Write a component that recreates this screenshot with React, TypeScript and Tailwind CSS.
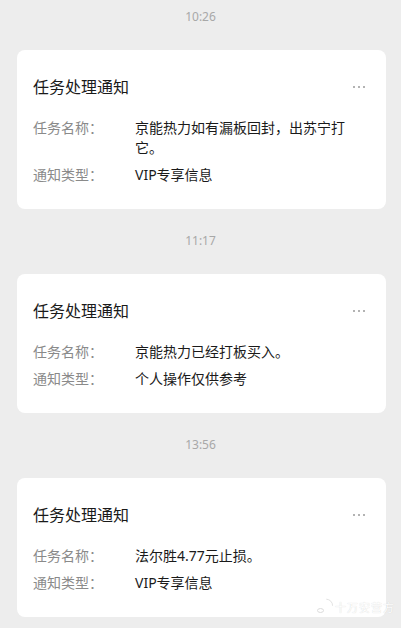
import React from "react";

type Row = { label: string; value: string };
type Notice = { time: string; title: string; rows: Row[] };

const notices: Notice[] = [
  {
    time: "10:26",
    title: "任务处理通知",
    rows: [
      { label: "任务名称：", value: "京能热力如有漏板回封，出苏宁打它。" },
      { label: "通知类型：", value: "VIP专享信息" },
    ],
  },
  {
    time: "11:17",
    title: "任务处理通知",
    rows: [
      { label: "任务名称：", value: "京能热力已经打板买入。" },
      { label: "通知类型：", value: "个人操作仅供参考" },
    ],
  },
  {
    time: "13:56",
    title: "任务处理通知",
    rows: [
      { label: "任务名称：", value: "法尔胜4.77元止损。" },
      { label: "通知类型：", value: "VIP专享信息" },
    ],
  },
];

function MoreDots() {
  return (
    <div className="flex items-center gap-[3px]">
      <span className="w-[2px] h-[2px] rounded-full bg-[#9a9a9a]" />
      <span className="w-[2px] h-[2px] rounded-full bg-[#9a9a9a]" />
      <span className="w-[2px] h-[2px] rounded-full bg-[#9a9a9a]" />
    </div>
  );
}

function NoticeCard({ notice }: { notice: Notice }) {
  return (
    <div className="flex flex-col">
      <div className="h-5 leading-5 text-center text-[12px] text-[#a8a8a8]">{notice.time}</div>
      <div className="mt-[23px] ml-[17px] w-[369px] rounded-[8px] bg-white pl-4 pr-[21px] pt-[25px] pb-6">
        <div className="flex items-center justify-between">
          <div className="text-[16px] leading-6 text-[#1a1a1a]">{notice.title}</div>
          <MoreDots />
        </div>
        <div className="mt-[19px] flex flex-col gap-[7px]">
          {notice.rows.map((row, i) => (
            <div key={i} className="flex text-[14px] leading-5">
              <div className="w-[102px] shrink-0 text-[#8a8a8a]">{row.label}</div>
              <div className="w-[215px] text-[#1a1a1a]">{row.value}</div>
            </div>
          ))}
        </div>
      </div>
    </div>
  );
}

function Watermark() {
  return (
    <div className="absolute right-[6px] top-[598px] flex items-end gap-[2px] opacity-90">
      <svg width="20" height="18" viewBox="0 0 20 18">
        <ellipse cx="8" cy="12" rx="7" ry="4.5" fill="none" stroke="#ffffff" strokeWidth="1.4" />
        <ellipse cx="7.5" cy="12.5" rx="3" ry="2" fill="none" stroke="#d9d9d9" strokeWidth="1" />
        <path d="M13 3.5a4 4 0 0 1 4.5 4" fill="none" stroke="#ffffff" strokeWidth="1.3" />
        <path d="M13.3 1.2a6.5 6.5 0 0 1 6.3 6.6" fill="none" stroke="#e0e0e0" strokeWidth="1" />
      </svg>
      <span className="text-[11px] leading-4 text-white [text-shadow:0_0_1px_#c8c8c8] tracking-[1px]">十万安营方</span>
    </div>
  );
}

export default function App() {
  return (
    <div
      className="relative min-h-[628px] w-[401px] bg-[#ededed] pt-[7px] flex flex-col gap-[22px]"
      style={{ fontFamily: '"Noto Sans", "Noto Sans CJK SC", sans-serif' }}
    >
      {notices.map((n, i) => (
        <NoticeCard key={i} notice={n} />
      ))}
      <Watermark />
    </div>
  );
}
